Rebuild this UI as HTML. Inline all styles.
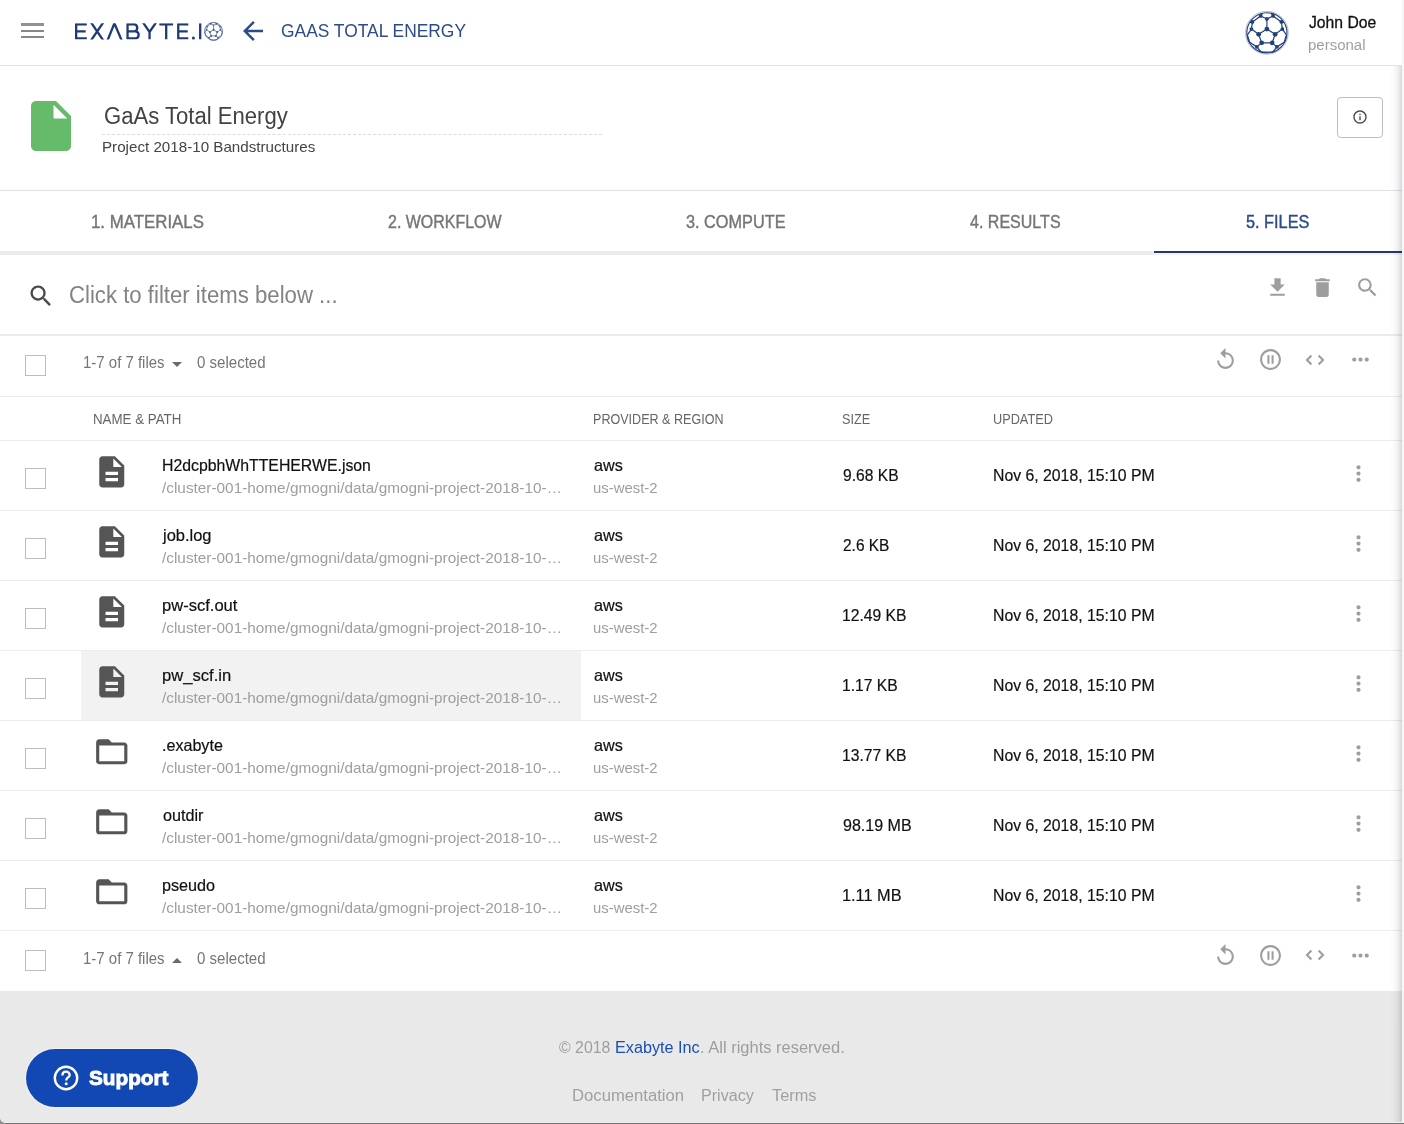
<!DOCTYPE html>
<html><head><meta charset="utf-8"><title>GaAs Total Energy</title>
<style>
html,body{margin:0;padding:0}
body{width:1404px;height:1124px;overflow:hidden;background:#fff;font-family:"Liberation Sans",sans-serif;position:relative}
.r,.ic,.t,.cb{position:absolute}
.ic{display:block;overflow:visible}
.t{white-space:pre;transform-origin:0 50%;display:inline-block}
#app{position:absolute;left:0;top:0;width:1404px;height:1124px;will-change:transform}
.cb{width:19px;height:19px;border:1px solid #bdbdbd;background:#fff}
</style></head>
<body>
<div id="app">
<div class="r" style="left:0px;top:0px;width:1402px;height:991px;background:#fff;"></div>
<div class="r" style="left:0px;top:991px;width:1402px;height:133px;background:#e9e9e9;"></div>
<div class="r" style="left:0px;top:65px;width:1402px;height:1px;background:#dde1ea;"></div>
<div class="r" style="left:0px;top:190px;width:1402px;height:1px;background:#dfe2ee;"></div>
<div class="r" style="left:0px;top:251px;width:1402px;height:4px;background:#ebebeb;"></div>
<div class="r" style="left:1154px;top:251px;width:248px;height:2px;background:#1f3a75;"></div>
<div class="r" style="left:1154px;top:253px;width:248px;height:2px;background:#f7f3f3;"></div>
<div class="r" style="left:0px;top:334px;width:1402px;height:2px;background:#ebebeb;"></div>
<div class="r" style="left:0px;top:396px;width:1402px;height:1px;background:#ededed;"></div>
<div class="r" style="left:0px;top:440px;width:1402px;height:1px;background:#ededed;"></div>
<div class="r" style="left:0px;top:510px;width:1402px;height:1px;background:#ededed;"></div>
<div class="r" style="left:0px;top:580px;width:1402px;height:1px;background:#ededed;"></div>
<div class="r" style="left:0px;top:650px;width:1402px;height:1px;background:#ededed;"></div>
<div class="r" style="left:0px;top:720px;width:1402px;height:1px;background:#ededed;"></div>
<div class="r" style="left:0px;top:790px;width:1402px;height:1px;background:#ededed;"></div>
<div class="r" style="left:0px;top:860px;width:1402px;height:1px;background:#ededed;"></div>
<div class="r" style="left:0px;top:930px;width:1402px;height:1px;background:#ededed;"></div>
<div class="r" style="left:81px;top:651px;width:500px;height:69px;background:#f2f2f2;"></div>
<div class="r" style="left:21px;top:23px;width:23px;height:3px;background:#909196;"></div>
<div class="r" style="left:21px;top:30px;width:23px;height:2px;background:#86878c;"></div>
<div class="r" style="left:21px;top:36px;width:23px;height:2px;background:#86878c;"></div>
<svg class="ic" style="left:70px;top:18px" width="160" height="28" viewBox="70 18 160 28"><defs><clipPath id="lc"><rect x="70" y="23.3" width="135" height="16.25"/></clipPath></defs><g clip-path="url(#lc)"><path d="M86.8 24.45H76.15V38.4H86.8M76.15 31.4H85.7M88.82 19.24L105.48 43.61M105.48 19.24L88.82 43.61M116.03 19.24L106.28 43.61M112.68 19.24L123.02 43.61M127.55 23.3V39.55M127.55 24.45H134.5A3.58 3.58 0 0 1 134.5 31.4H127.55M134.5 31.4H135.7A3.55 3.55 0 0 1 135.7 38.4H127.55M141.81 20.69L149.55 32.0L157.28 20.69M149.55 31.5V39.55M159.35 24.45H173.1M166.2 23.3V39.55M188.3 24.45H178.25V38.4H188.3M178.25 31.4H187.7M200.2 23.3V39.55" fill="none" stroke="#1e3a78" stroke-width="2.3" stroke-linejoin="miter"/></g><circle cx="193.4" cy="38.1" r="1.5" fill="#1e3a78"/><g opacity="0.85"><circle cx="213.55" cy="31.4" r="8.95" fill="none" stroke="#1e3a78" stroke-width="0.8"/><path d="M213.55 29.74L217.22 32.07M217.22 32.07L215.88 35.88M215.88 35.88L211.22 35.88M211.22 35.88L209.88 32.07M209.88 32.07L213.55 29.74M213.55 29.74L213.55 25.22M213.55 25.22L216.32 23.88M213.55 25.22L210.78 23.88M216.32 23.88L219.99 26.57M210.78 23.88L207.11 26.57M219.99 26.57L220.44 29.74M207.11 26.57L206.66 29.74M220.44 29.74L217.22 32.07M206.66 29.74L209.88 32.07M215.88 35.88L218.03 37.66M211.22 35.88L209.08 37.66M220.44 29.74L222.23 32.30M206.66 29.74L204.87 32.30M222.23 32.30L221.25 35.61M204.87 32.30L205.85 35.61M221.25 35.61L218.03 37.66M205.85 35.61L209.08 37.66M218.03 37.66L216.15 39.95M209.08 37.66L210.95 39.95M216.15 39.95L210.95 39.95M216.32 23.88L215.34 22.63M210.78 23.88L211.76 22.63M219.99 26.57L221.25 26.84M207.11 26.57L205.85 26.84" fill="none" stroke="#1e3a78" stroke-width="0.7"/><circle cx="213.55" cy="29.74" r="1.0" fill="#1e3a78"/><circle cx="217.22" cy="32.07" r="1.0" fill="#1e3a78"/><circle cx="215.88" cy="35.88" r="1.0" fill="#1e3a78"/><circle cx="211.22" cy="35.88" r="1.0" fill="#1e3a78"/><circle cx="209.88" cy="32.07" r="1.0" fill="#1e3a78"/><circle cx="213.55" cy="25.22" r="0.8" fill="#1e3a78"/><circle cx="216.32" cy="23.88" r="0.8" fill="#1e3a78"/><circle cx="210.78" cy="23.88" r="0.8" fill="#1e3a78"/><circle cx="219.99" cy="26.57" r="0.8" fill="#1e3a78"/><circle cx="207.11" cy="26.57" r="0.8" fill="#1e3a78"/><circle cx="220.44" cy="29.74" r="0.8" fill="#1e3a78"/><circle cx="206.66" cy="29.74" r="0.8" fill="#1e3a78"/><circle cx="218.03" cy="37.66" r="0.8" fill="#1e3a78"/><circle cx="209.08" cy="37.66" r="0.8" fill="#1e3a78"/></g></svg>
<svg class="ic" style="left:237.50px;top:15.60px" width="30" height="30" viewBox="0 0 24 24"><path fill="#2d4b8a" d="M20 11H7.83l5.59-5.59L12 4l-8 8 8 8 1.41-1.41L7.83 13H20v-2z"/></svg>
<span class="t" id="hdr" style="left:281px;top:20px;font-size:18.5px;line-height:21px;height:21px;color:#2d4b8a;transform:scaleX(0.9405);">GAAS TOTAL ENERGY</span>
<svg class="ic" style="left:1243px;top:9px" width="48" height="48" viewBox="1243 9 48 48"><circle cx="1266.9" cy="32.8" r="21.4" fill="#fff" stroke="#b0b0b0" stroke-width="0.8"/><circle cx="1266.9" cy="32.8" r="20.1" fill="none" stroke="#22407e" stroke-width="1.1"/><path d="M1266.90 29.08L1275.14 34.31M1275.14 34.31L1272.13 42.85M1272.13 42.85L1261.67 42.85M1261.67 42.85L1258.66 34.31M1258.66 34.31L1266.90 29.08M1266.90 29.08L1266.90 18.93M1266.90 18.93L1273.13 15.92M1266.90 18.93L1260.67 15.92M1273.13 15.92L1281.37 21.95M1260.67 15.92L1252.43 21.95M1281.37 21.95L1282.38 29.08M1252.43 21.95L1251.42 29.08M1282.38 29.08L1275.14 34.31M1251.42 29.08L1258.66 34.31M1272.13 42.85L1276.95 46.87M1261.67 42.85L1256.85 46.87M1282.38 29.08L1286.40 34.81M1251.42 29.08L1247.40 34.81M1286.40 34.81L1284.19 42.25M1247.40 34.81L1249.61 42.25M1284.19 42.25L1276.95 46.87M1249.61 42.25L1256.85 46.87M1276.95 46.87L1272.73 52.00M1256.85 46.87L1261.07 52.00M1272.73 52.00L1261.07 52.00M1273.13 15.92L1270.92 13.10M1260.67 15.92L1262.88 13.10M1281.37 21.95L1284.19 22.55M1252.43 21.95L1249.61 22.55" fill="none" stroke="#22407e" stroke-width="1.2"/><circle cx="1266.90" cy="29.08" r="2.4" fill="#22407e"/><circle cx="1275.14" cy="34.31" r="2.4" fill="#22407e"/><circle cx="1272.13" cy="42.85" r="2.4" fill="#22407e"/><circle cx="1261.67" cy="42.85" r="2.4" fill="#22407e"/><circle cx="1258.66" cy="34.31" r="2.4" fill="#22407e"/><circle cx="1266.90" cy="18.93" r="1.9" fill="#22407e"/><circle cx="1273.13" cy="15.92" r="1.9" fill="#22407e"/><circle cx="1260.67" cy="15.92" r="1.9" fill="#22407e"/><circle cx="1281.37" cy="21.95" r="1.9" fill="#22407e"/><circle cx="1252.43" cy="21.95" r="1.9" fill="#22407e"/><circle cx="1282.38" cy="29.08" r="1.9" fill="#22407e"/><circle cx="1251.42" cy="29.08" r="1.9" fill="#22407e"/><circle cx="1276.95" cy="46.87" r="1.9" fill="#22407e"/><circle cx="1256.85" cy="46.87" r="1.9" fill="#22407e"/></svg>
<span class="t" id="uname" style="left:1309px;top:13px;font-size:16.5px;line-height:18px;height:18px;color:#111;transform:scaleX(0.9535);-webkit-text-stroke:0.3px #111;">John Doe</span>
<span class="t" id="urole" style="left:1308px;top:36px;font-size:15.5px;line-height:17px;height:17px;color:#9e9e9e;transform:scaleX(0.9672);">personal</span>
<svg class="ic" style="left:21.00px;top:96.30px" width="60" height="60" viewBox="0 0 24 24"><path fill="#66bb6a" d="M6 2c-1.1 0-1.99.9-1.99 2L4 20c0 1.1.89 2 1.99 2H18c1.1 0 2-.9 2-2V8l-6-6H6zm7 7V3.5L18.5 9H13z"/></svg>
<span class="t" id="title" style="left:104px;top:103px;font-size:23px;line-height:26px;height:26px;color:#424242;transform:scaleX(0.9602);">GaAs Total Energy</span>
<div class="r" style="left:102px;top:134px;width:500px;height:0;border-top:1px dashed #dcdcdc"></div>
<span class="t" id="proj" style="left:102px;top:139px;font-size:14.5px;line-height:16px;height:16px;color:#444;transform:scaleX(1.0458);">Project 2018-10 Bandstructures</span>
<div class="r" style="left:1337px;top:97px;width:44px;height:39px;border:1px solid #bdbdbd;border-radius:4px"></div>
<svg class="ic" style="left:1352.30px;top:109.00px" width="16" height="16" viewBox="0 0 24 24"><path fill="#444" d="M11 17h2v-6h-2v6zm1-15C6.48 2 2 6.48 2 12s4.48 10 10 10 10-4.48 10-10S17.52 2 12 2zm0 18c-4.41 0-8-3.59-8-8s3.59-8 8-8 8 3.59 8 8-3.59 8-8 8zM11 9h2V7h-2v2z"/></svg>
<span class="t" id="tab1" style="left:91px;top:212px;font-size:17.5px;line-height:20px;height:20px;color:#757575;transform:scaleX(0.9621);-webkit-text-stroke:0.4px #757575;">1. MATERIALS</span>
<span class="t" id="tab2" style="left:388px;top:212px;font-size:17.5px;line-height:20px;height:20px;color:#757575;transform:scaleX(0.9128);-webkit-text-stroke:0.4px #757575;">2. WORKFLOW</span>
<span class="t" id="tab3" style="left:686px;top:212px;font-size:17.5px;line-height:20px;height:20px;color:#757575;transform:scaleX(0.9308);-webkit-text-stroke:0.4px #757575;">3. COMPUTE</span>
<span class="t" id="tab4" style="left:970px;top:212px;font-size:17.5px;line-height:20px;height:20px;color:#757575;transform:scaleX(0.9162);-webkit-text-stroke:0.4px #757575;">4. RESULTS</span>
<span class="t" id="tab5" style="left:1246px;top:212px;font-size:17.5px;line-height:20px;height:20px;color:#2d4b8a;transform:scaleX(0.9309);-webkit-text-stroke:0.4px #2d4b8a;">5. FILES</span>
<svg class="ic" style="left:26.70px;top:281.60px" width="28" height="28" viewBox="0 0 24 24"><path fill="#4a4a4a" d="M15.5 14h-.79l-.28-.27C15.41 12.59 16 11.11 16 9.5 16 5.91 13.09 3 9.5 3S3 5.91 3 9.5 5.91 16 9.5 16c1.61 0 3.09-.59 4.23-1.57l.27.28v.79l5 4.99L20.49 19l-4.99-5zm-6 0C7.01 14 5 11.99 5 9.5S7.01 5 9.5 5 14 7.01 14 9.5 11.99 14 9.500 14z"/></svg>
<span class="t" id="filter" style="left:69px;top:282px;font-size:23px;line-height:26px;height:26px;color:#838383;transform:scaleX(0.9638);">Click to filter items below ...</span>
<svg class="ic" style="left:1264.60px;top:275.00px" width="25" height="25" viewBox="0 0 24 24"><path fill="#9e9e9e" d="M19 9h-4V3H9v6H5l7 7 7-7zM5 18v2h14v-2H5z"/></svg>
<svg class="ic" style="left:1309.60px;top:274.90px" width="25" height="25" viewBox="0 0 24 24"><path fill="#9e9e9e" d="M6 19c0 1.1.9 2 2 2h8c1.1 0 2-.9 2-2V7H6v12zM19 4h-3.5l-1-1h-5l-1 1H5v2h14V4z"/></svg>
<svg class="ic" style="left:1354.70px;top:275.10px" width="25" height="25" viewBox="0 0 24 24"><path fill="#9e9e9e" d="M15.5 14h-.79l-.28-.27C15.41 12.59 16 11.11 16 9.5 16 5.91 13.09 3 9.5 3S3 5.91 3 9.5 5.91 16 9.5 16c1.61 0 3.09-.59 4.23-1.57l.27.28v.79l5 4.99L20.49 19l-4.99-5zm-6 0C7.01 14 5 11.99 5 9.5S7.01 5 9.5 5 14 7.01 14 9.5 11.99 14 9.500 14z"/></svg>
<div class="cb" style="left:25px;top:355px"></div>
<span class="t" id="cnta" style="left:83px;top:354px;font-size:16px;line-height:17px;height:17px;color:#757575;transform:scaleX(0.9360);">1-7 of 7 files</span>
<span class="t" id="sela" style="left:197px;top:354px;font-size:16px;line-height:17px;height:17px;color:#757575;transform:scaleX(0.9403);">0 selected</span>
<svg class="ic" style="left:172px;top:362px" width="10" height="5" viewBox="0 0 10 5"><path fill="#6b6b6b" d="M0 0L5 5L10 0Z"/></svg>
<svg class="ic" style="left:1213.30px;top:347.40px" width="25" height="25" viewBox="0 0 24 24"><path fill="#9e9e9e" d="M12 5V1L7 6l5 5V7c3.31 0 6 2.69 6 6s-2.69 6-6 6-6-2.69-6-6H4c0 4.42 3.58 8 8 8s8-3.58 8-8-3.58-8-8-8z"/></svg>
<svg class="ic" style="left:1258.00px;top:346.90px" width="25" height="25" viewBox="0 0 24 24"><path fill="#9e9e9e" d="M9 16h2V8H9v8zm3-14C6.48 2 2 6.48 2 12s4.48 10 10 10 10-4.48 10-10S17.52 2 12 2zm0 18c-4.41 0-8-3.59-8-8s3.59-8 8-8 8 3.59 8 8-3.59 8-8 8zm1-4h2V8h-2v8z"/></svg>
<svg class="ic" style="left:1301.9px;top:351.70px" width="26" height="16" viewBox="-13 -8 26 16" fill="none" stroke="#9e9e9e" stroke-width="2.100"><path d="M-3.600 -4.600L-8 0L-3.600 4.600M3.600 -4.600L8 0L3.600 4.600"/></svg>
<svg class="ic" style="left:1348.40px;top:347.30px" width="25" height="25" viewBox="0 0 24 24"><path fill="#9e9e9e" d="M6 10c-1.1 0-2 .9-2 2s.9 2 2 2 2-.9 2-2-.9-2-2-2zm12 0c-1.1 0-2 .9-2 2s.9 2 2 2 2-.9 2-2-.9-2-2-2zm-6 0c-1.1 0-2 .9-2 2s.9 2 2 2 2-.9 2-2-.9-2-2-2z"/></svg>
<div class="cb" style="left:25px;top:950px"></div>
<span class="t" id="cntb" style="left:83px;top:950px;font-size:16px;line-height:17px;height:17px;color:#757575;transform:scaleX(0.9360);">1-7 of 7 files</span>
<span class="t" id="selb" style="left:197px;top:950px;font-size:16px;line-height:17px;height:17px;color:#757575;transform:scaleX(0.9403);">0 selected</span>
<svg class="ic" style="left:172px;top:958px" width="10" height="5" viewBox="0 0 10 5"><path fill="#6b6b6b" d="M0 5L5 0L10 5Z"/></svg>
<svg class="ic" style="left:1213.30px;top:942.90px" width="25" height="25" viewBox="0 0 24 24"><path fill="#9e9e9e" d="M12 5V1L7 6l5 5V7c3.31 0 6 2.69 6 6s-2.69 6-6 6-6-2.69-6-6H4c0 4.42 3.58 8 8 8s8-3.58 8-8-3.58-8-8-8z"/></svg>
<svg class="ic" style="left:1258.00px;top:943.20px" width="25" height="25" viewBox="0 0 24 24"><path fill="#9e9e9e" d="M9 16h2V8H9v8zm3-14C6.48 2 2 6.48 2 12s4.48 10 10 10 10-4.48 10-10S17.52 2 12 2zm0 18c-4.41 0-8-3.59-8-8s3.59-8 8-8 8 3.59 8 8-3.59 8-8 8zm1-4h2V8h-2v8z"/></svg>
<svg class="ic" style="left:1301.9px;top:947.20px" width="26" height="16" viewBox="-13 -8 26 16" fill="none" stroke="#9e9e9e" stroke-width="2.100"><path d="M-3.600 -4.600L-8 0L-3.600 4.600M3.600 -4.600L8 0L3.600 4.600"/></svg>
<svg class="ic" style="left:1348.40px;top:942.80px" width="25" height="25" viewBox="0 0 24 24"><path fill="#9e9e9e" d="M6 10c-1.1 0-2 .9-2 2s.9 2 2 2 2-.9 2-2-.9-2-2-2zm12 0c-1.1 0-2 .9-2 2s.9 2 2 2 2-.9 2-2-.9-2-2-2zm-6 0c-1.1 0-2 .9-2 2s.9 2 2 2 2-.9 2-2-.9-2-2-2z"/></svg>
<span class="t" id="h1" style="left:93px;top:411px;font-size:14px;line-height:16px;height:16px;color:#666;transform:scaleX(0.9516);">NAME &amp; PATH</span>
<span class="t" id="h2" style="left:593px;top:411px;font-size:14px;line-height:16px;height:16px;color:#666;transform:scaleX(0.8972);">PROVIDER &amp; REGION</span>
<span class="t" id="h3" style="left:842px;top:411px;font-size:14px;line-height:16px;height:16px;color:#666;transform:scaleX(0.9067);">SIZE</span>
<span class="t" id="h4" style="left:993px;top:411px;font-size:14px;line-height:16px;height:16px;color:#666;transform:scaleX(0.9092);">UPDATED</span>
<div class="cb" style="left:25px;top:468px"></div>
<svg class="ic" style="left:92.90px;top:452.95px" width="37.5" height="37.5" viewBox="0 0 24 24"><path fill="#555" d="M14 2H6c-1.1 0-1.99.9-1.99 2L4 20c0 1.1.89 2 1.99 2H18c1.1 0 2-.9 2-2V8l-6-6zm2 16H8v-2h8v2zm0-4H8v-2h8v2zm-3-5V3.5L18.5 9H13z"/></svg>
<span class="t" id="n0" style="left:162px;top:456px;font-size:16.5px;line-height:18px;height:18px;color:#111;transform:scaleX(0.9585);-webkit-text-stroke:0.2px #111;">H2dcpbhWhTTEHERWE.json</span>
<span class="t" id="p0" style="left:162px;top:479px;font-size:15px;line-height:17px;height:17px;color:#9e9e9e;transform:scaleX(1.0229);">/cluster-001-home/gmogni/data/gmogni-project-2018-10-&hellip;</span>
<span class="t" id="a0" style="left:594px;top:456px;font-size:16.5px;line-height:18px;height:18px;color:#111;transform:scaleX(0.9828);-webkit-text-stroke:0.2px #111;">aws</span>
<span class="t" id="r0" style="left:593px;top:479px;font-size:15px;line-height:17px;height:17px;color:#9e9e9e;transform:scaleX(0.9922);">us-west-2</span>
<span class="t" id="s0" style="left:843px;top:466px;font-size:16.5px;line-height:18px;height:18px;color:#111;transform:scaleX(0.9466);-webkit-text-stroke:0.2px #111;">9.68 KB</span>
<span class="t" id="u0" style="left:993px;top:466px;font-size:16.5px;line-height:18px;height:18px;color:#111;transform:scaleX(0.9575);-webkit-text-stroke:0.2px #111;">Nov 6, 2018, 15:10 PM</span>
<svg class="ic" style="left:1345.80px;top:461.20px" width="25" height="25" viewBox="0 0 24 24"><path fill="#9e9e9e" d="M12 8c1.1 0 2-.9 2-2s-.9-2-2-2-2 .9-2 2 .9 2 2 2zm0 2c-1.1 0-2 .9-2 2s.9 2 2 2 2-.9 2-2-.9-2-2-2zm0 6c-1.1 0-2 .9-2 2s.9 2 2 2 2-.9 2-2-.9-2-2-2z"/></svg>
<div class="cb" style="left:25px;top:538px"></div>
<svg class="ic" style="left:92.90px;top:522.95px" width="37.5" height="37.5" viewBox="0 0 24 24"><path fill="#555" d="M14 2H6c-1.1 0-1.99.9-1.99 2L4 20c0 1.1.89 2 1.99 2H18c1.1 0 2-.9 2-2V8l-6-6zm2 16H8v-2h8v2zm0-4H8v-2h8v2zm-3-5V3.5L18.5 9H13z"/></svg>
<span class="t" id="n1" style="left:163px;top:526px;font-size:16.5px;line-height:18px;height:18px;color:#111;transform:scaleX(0.9980);-webkit-text-stroke:0.2px #111;">job.log</span>
<span class="t" id="p1" style="left:162px;top:549px;font-size:15px;line-height:17px;height:17px;color:#9e9e9e;transform:scaleX(1.0229);">/cluster-001-home/gmogni/data/gmogni-project-2018-10-&hellip;</span>
<span class="t" id="a1" style="left:594px;top:526px;font-size:16.5px;line-height:18px;height:18px;color:#111;transform:scaleX(0.9828);-webkit-text-stroke:0.2px #111;">aws</span>
<span class="t" id="r1" style="left:593px;top:549px;font-size:15px;line-height:17px;height:17px;color:#9e9e9e;transform:scaleX(0.9922);">us-west-2</span>
<span class="t" id="s1" style="left:843px;top:536px;font-size:16.5px;line-height:18px;height:18px;color:#111;transform:scaleX(0.9367);-webkit-text-stroke:0.2px #111;">2.6 KB</span>
<span class="t" id="u1" style="left:993px;top:536px;font-size:16.5px;line-height:18px;height:18px;color:#111;transform:scaleX(0.9575);-webkit-text-stroke:0.2px #111;">Nov 6, 2018, 15:10 PM</span>
<svg class="ic" style="left:1345.80px;top:531.20px" width="25" height="25" viewBox="0 0 24 24"><path fill="#9e9e9e" d="M12 8c1.1 0 2-.9 2-2s-.9-2-2-2-2 .9-2 2 .9 2 2 2zm0 2c-1.1 0-2 .9-2 2s.9 2 2 2 2-.9 2-2-.9-2-2-2zm0 6c-1.1 0-2 .9-2 2s.9 2 2 2 2-.9 2-2-.9-2-2-2z"/></svg>
<div class="cb" style="left:25px;top:608px"></div>
<svg class="ic" style="left:92.90px;top:592.95px" width="37.5" height="37.5" viewBox="0 0 24 24"><path fill="#555" d="M14 2H6c-1.1 0-1.99.9-1.99 2L4 20c0 1.1.89 2 1.99 2H18c1.1 0 2-.9 2-2V8l-6-6zm2 16H8v-2h8v2zm0-4H8v-2h8v2zm-3-5V3.5L18.5 9H13z"/></svg>
<span class="t" id="n2" style="left:162px;top:596px;font-size:16.5px;line-height:18px;height:18px;color:#111;transform:scaleX(1.0027);-webkit-text-stroke:0.2px #111;">pw-scf.out</span>
<span class="t" id="p2" style="left:162px;top:619px;font-size:15px;line-height:17px;height:17px;color:#9e9e9e;transform:scaleX(1.0229);">/cluster-001-home/gmogni/data/gmogni-project-2018-10-&hellip;</span>
<span class="t" id="a2" style="left:594px;top:596px;font-size:16.5px;line-height:18px;height:18px;color:#111;transform:scaleX(0.9828);-webkit-text-stroke:0.2px #111;">aws</span>
<span class="t" id="r2" style="left:593px;top:619px;font-size:15px;line-height:17px;height:17px;color:#9e9e9e;transform:scaleX(0.9922);">us-west-2</span>
<span class="t" id="s2" style="left:842px;top:606px;font-size:16.5px;line-height:18px;height:18px;color:#111;transform:scaleX(0.9507);-webkit-text-stroke:0.2px #111;">12.49 KB</span>
<span class="t" id="u2" style="left:993px;top:606px;font-size:16.5px;line-height:18px;height:18px;color:#111;transform:scaleX(0.9575);-webkit-text-stroke:0.2px #111;">Nov 6, 2018, 15:10 PM</span>
<svg class="ic" style="left:1345.80px;top:601.20px" width="25" height="25" viewBox="0 0 24 24"><path fill="#9e9e9e" d="M12 8c1.1 0 2-.9 2-2s-.9-2-2-2-2 .9-2 2 .9 2 2 2zm0 2c-1.1 0-2 .9-2 2s.9 2 2 2 2-.9 2-2-.9-2-2-2zm0 6c-1.1 0-2 .9-2 2s.9 2 2 2 2-.9 2-2-.9-2-2-2z"/></svg>
<div class="cb" style="left:25px;top:678px"></div>
<svg class="ic" style="left:92.90px;top:662.95px" width="37.5" height="37.5" viewBox="0 0 24 24"><path fill="#555" d="M14 2H6c-1.1 0-1.99.9-1.99 2L4 20c0 1.1.89 2 1.99 2H18c1.1 0 2-.9 2-2V8l-6-6zm2 16H8v-2h8v2zm0-4H8v-2h8v2zm-3-5V3.5L18.5 9H13z"/></svg>
<span class="t" id="n3" style="left:162px;top:666px;font-size:16.5px;line-height:18px;height:18px;color:#111;transform:scaleX(1.0060);-webkit-text-stroke:0.2px #111;">pw_scf.in</span>
<span class="t" id="p3" style="left:162px;top:689px;font-size:15px;line-height:17px;height:17px;color:#9e9e9e;transform:scaleX(1.0229);">/cluster-001-home/gmogni/data/gmogni-project-2018-10-&hellip;</span>
<span class="t" id="a3" style="left:594px;top:666px;font-size:16.5px;line-height:18px;height:18px;color:#111;transform:scaleX(0.9828);-webkit-text-stroke:0.2px #111;">aws</span>
<span class="t" id="r3" style="left:593px;top:689px;font-size:15px;line-height:17px;height:17px;color:#9e9e9e;transform:scaleX(0.9922);">us-west-2</span>
<span class="t" id="s3" style="left:842px;top:676px;font-size:16.5px;line-height:18px;height:18px;color:#111;transform:scaleX(0.9491);-webkit-text-stroke:0.2px #111;">1.17 KB</span>
<span class="t" id="u3" style="left:993px;top:676px;font-size:16.5px;line-height:18px;height:18px;color:#111;transform:scaleX(0.9575);-webkit-text-stroke:0.2px #111;">Nov 6, 2018, 15:10 PM</span>
<svg class="ic" style="left:1345.80px;top:671.20px" width="25" height="25" viewBox="0 0 24 24"><path fill="#9e9e9e" d="M12 8c1.1 0 2-.9 2-2s-.9-2-2-2-2 .9-2 2 .9 2 2 2zm0 2c-1.1 0-2 .9-2 2s.9 2 2 2 2-.9 2-2-.9-2-2-2zm0 6c-1.1 0-2 .9-2 2s.9 2 2 2 2-.9 2-2-.9-2-2-2z"/></svg>
<div class="cb" style="left:25px;top:748px"></div>
<svg class="ic" style="left:92.75px;top:732.95px" width="37.5" height="37.5" viewBox="0 0 24 24"><path fill="#555" d="M20 6h-8l-2-2H4c-1.1 0-1.99.9-1.99 2L2 18c0 1.1.9 2 2 2h16c1.1 0 2-.9 2-2V8c0-1.1-.9-2-2-2zm0 12H4V8h16v10z"/></svg>
<span class="t" id="n4" style="left:162px;top:736px;font-size:16.5px;line-height:18px;height:18px;color:#111;transform:scaleX(0.9754);-webkit-text-stroke:0.2px #111;">.exabyte</span>
<span class="t" id="p4" style="left:162px;top:759px;font-size:15px;line-height:17px;height:17px;color:#9e9e9e;transform:scaleX(1.0229);">/cluster-001-home/gmogni/data/gmogni-project-2018-10-&hellip;</span>
<span class="t" id="a4" style="left:594px;top:736px;font-size:16.5px;line-height:18px;height:18px;color:#111;transform:scaleX(0.9828);-webkit-text-stroke:0.2px #111;">aws</span>
<span class="t" id="r4" style="left:593px;top:759px;font-size:15px;line-height:17px;height:17px;color:#9e9e9e;transform:scaleX(0.9922);">us-west-2</span>
<span class="t" id="s4" style="left:842px;top:746px;font-size:16.5px;line-height:18px;height:18px;color:#111;transform:scaleX(0.9507);-webkit-text-stroke:0.2px #111;">13.77 KB</span>
<span class="t" id="u4" style="left:993px;top:746px;font-size:16.5px;line-height:18px;height:18px;color:#111;transform:scaleX(0.9575);-webkit-text-stroke:0.2px #111;">Nov 6, 2018, 15:10 PM</span>
<svg class="ic" style="left:1345.80px;top:741.20px" width="25" height="25" viewBox="0 0 24 24"><path fill="#9e9e9e" d="M12 8c1.1 0 2-.9 2-2s-.9-2-2-2-2 .9-2 2 .9 2 2 2zm0 2c-1.1 0-2 .9-2 2s.9 2 2 2 2-.9 2-2-.9-2-2-2zm0 6c-1.1 0-2 .9-2 2s.9 2 2 2 2-.9 2-2-.9-2-2-2z"/></svg>
<div class="cb" style="left:25px;top:818px"></div>
<svg class="ic" style="left:92.75px;top:802.95px" width="37.5" height="37.5" viewBox="0 0 24 24"><path fill="#555" d="M20 6h-8l-2-2H4c-1.1 0-1.99.9-1.99 2L2 18c0 1.1.9 2 2 2h16c1.1 0 2-.9 2-2V8c0-1.1-.9-2-2-2zm0 12H4V8h16v10z"/></svg>
<span class="t" id="n5" style="left:163px;top:806px;font-size:16.5px;line-height:18px;height:18px;color:#111;transform:scaleX(0.9810);-webkit-text-stroke:0.2px #111;">outdir</span>
<span class="t" id="p5" style="left:162px;top:829px;font-size:15px;line-height:17px;height:17px;color:#9e9e9e;transform:scaleX(1.0229);">/cluster-001-home/gmogni/data/gmogni-project-2018-10-&hellip;</span>
<span class="t" id="a5" style="left:594px;top:806px;font-size:16.5px;line-height:18px;height:18px;color:#111;transform:scaleX(0.9828);-webkit-text-stroke:0.2px #111;">aws</span>
<span class="t" id="r5" style="left:593px;top:829px;font-size:15px;line-height:17px;height:17px;color:#9e9e9e;transform:scaleX(0.9922);">us-west-2</span>
<span class="t" id="s5" style="left:843px;top:816px;font-size:16.5px;line-height:18px;height:18px;color:#111;transform:scaleX(0.9714);-webkit-text-stroke:0.2px #111;">98.19 MB</span>
<span class="t" id="u5" style="left:993px;top:816px;font-size:16.5px;line-height:18px;height:18px;color:#111;transform:scaleX(0.9575);-webkit-text-stroke:0.2px #111;">Nov 6, 2018, 15:10 PM</span>
<svg class="ic" style="left:1345.80px;top:811.20px" width="25" height="25" viewBox="0 0 24 24"><path fill="#9e9e9e" d="M12 8c1.1 0 2-.9 2-2s-.9-2-2-2-2 .9-2 2 .9 2 2 2zm0 2c-1.1 0-2 .9-2 2s.9 2 2 2 2-.9 2-2-.9-2-2-2zm0 6c-1.1 0-2 .9-2 2s.9 2 2 2 2-.9 2-2-.9-2-2-2z"/></svg>
<div class="cb" style="left:25px;top:888px"></div>
<svg class="ic" style="left:92.75px;top:872.95px" width="37.5" height="37.5" viewBox="0 0 24 24"><path fill="#555" d="M20 6h-8l-2-2H4c-1.1 0-1.99.9-1.99 2L2 18c0 1.1.9 2 2 2h16c1.1 0 2-.9 2-2V8c0-1.1-.9-2-2-2zm0 12H4V8h16v10z"/></svg>
<span class="t" id="n6" style="left:162px;top:876px;font-size:16.5px;line-height:18px;height:18px;color:#111;transform:scaleX(0.9811);-webkit-text-stroke:0.2px #111;">pseudo</span>
<span class="t" id="p6" style="left:162px;top:899px;font-size:15px;line-height:17px;height:17px;color:#9e9e9e;transform:scaleX(1.0229);">/cluster-001-home/gmogni/data/gmogni-project-2018-10-&hellip;</span>
<span class="t" id="a6" style="left:594px;top:876px;font-size:16.5px;line-height:18px;height:18px;color:#111;transform:scaleX(0.9828);-webkit-text-stroke:0.2px #111;">aws</span>
<span class="t" id="r6" style="left:593px;top:899px;font-size:15px;line-height:17px;height:17px;color:#9e9e9e;transform:scaleX(0.9922);">us-west-2</span>
<span class="t" id="s6" style="left:842px;top:886px;font-size:16.5px;line-height:18px;height:18px;color:#111;transform:scaleX(0.9898);-webkit-text-stroke:0.2px #111;">1.11 MB</span>
<span class="t" id="u6" style="left:993px;top:886px;font-size:16.5px;line-height:18px;height:18px;color:#111;transform:scaleX(0.9575);-webkit-text-stroke:0.2px #111;">Nov 6, 2018, 15:10 PM</span>
<svg class="ic" style="left:1345.80px;top:881.20px" width="25" height="25" viewBox="0 0 24 24"><path fill="#9e9e9e" d="M12 8c1.1 0 2-.9 2-2s-.9-2-2-2-2 .9-2 2 .9 2 2 2zm0 2c-1.1 0-2 .9-2 2s.9 2 2 2 2-.9 2-2-.9-2-2-2zm0 6c-1.1 0-2 .9-2 2s.9 2 2 2 2-.9 2-2-.9-2-2-2z"/></svg>
<span class="t" id="f1" style="left:559px;top:1039px;font-size:16px;line-height:17px;height:17px;color:#9e9e9e;transform:scaleX(0.9904);">&copy; 2018</span>
<span class="t" id="f2" style="left:615px;top:1039px;font-size:16px;line-height:17px;height:17px;color:#1a4db5;transform:scaleX(1.0122);">Exabyte Inc</span>
<span class="t" id="f3" style="left:700px;top:1039px;font-size:16px;line-height:17px;height:17px;color:#9e9e9e;transform:scaleX(1.0304);">. All rights reserved.</span>
<span class="t" id="f4" style="left:572px;top:1087px;font-size:16px;line-height:17px;height:17px;color:#a0a0a0;transform:scaleX(1.0415);">Documentation</span>
<span class="t" id="f5" style="left:701px;top:1087px;font-size:16px;line-height:17px;height:17px;color:#a0a0a0;transform:scaleX(1.0058);">Privacy</span>
<span class="t" id="f6" style="left:772px;top:1087px;font-size:16px;line-height:17px;height:17px;color:#a0a0a0;transform:scaleX(1.0209);">Terms</span>
<div class="r" style="left:26px;top:1049px;width:172px;height:58px;border-radius:29px;background:#1148b4;box-shadow:0 0 0 1px rgba(255,250,242,0.55)"></div>
<svg class="ic" style="left:51.3px;top:1062.5px" width="30" height="30" viewBox="-15 -15 30 30" fill="none"><circle cx="0" cy="0" r="11.200" stroke="#fff" stroke-width="2.400"/><path d="M-3.600 -2.600C-3.600 -5 -1.800 -6.300 0.100 -6.300C2 -6.300 3.700 -5.100 3.700 -3.100C3.700 -0.600 0.200 -0.400 0.200 2.400" stroke="#fff" stroke-width="2.300"/><circle cx="0.200" cy="5.700" r="1.500" fill="#fff"/></svg>
<span class="t" id="sup" style="left:89px;top:1067px;font-size:19.5px;line-height:22px;height:22px;color:#fff;transform:scaleX(1.0627);font-weight:700;-webkit-text-stroke:0.9px #fff;">Support</span>
<div class="r" style="left:1390px;top:66px;width:12px;height:1058px;background:linear-gradient(to right,rgba(0,0,0,0) 0%,rgba(0,0,0,0.015) 30%,rgba(0,0,0,0.060) 65%,rgba(0,0,0,0.150) 100%)"></div>
<div class="r" style="left:1402px;top:0px;width:2px;height:1124px;background:#f6f6f6;"></div>
<div class="r" style="left:0px;top:1122px;width:1404px;height:1px;background:#f0f0f0;"></div>
<div class="r" style="left:0px;top:1123px;width:1404px;height:1px;background:#727272;"></div>
<svg class="ic" style="left:0;top:1118px" width="6" height="6" viewBox="0 0 6 6"><path d="M0 0V6H6V5H5A5 5 0 0 1 0 0Z" fill="#8c8c8c"/></svg>
</div>
</body></html>
